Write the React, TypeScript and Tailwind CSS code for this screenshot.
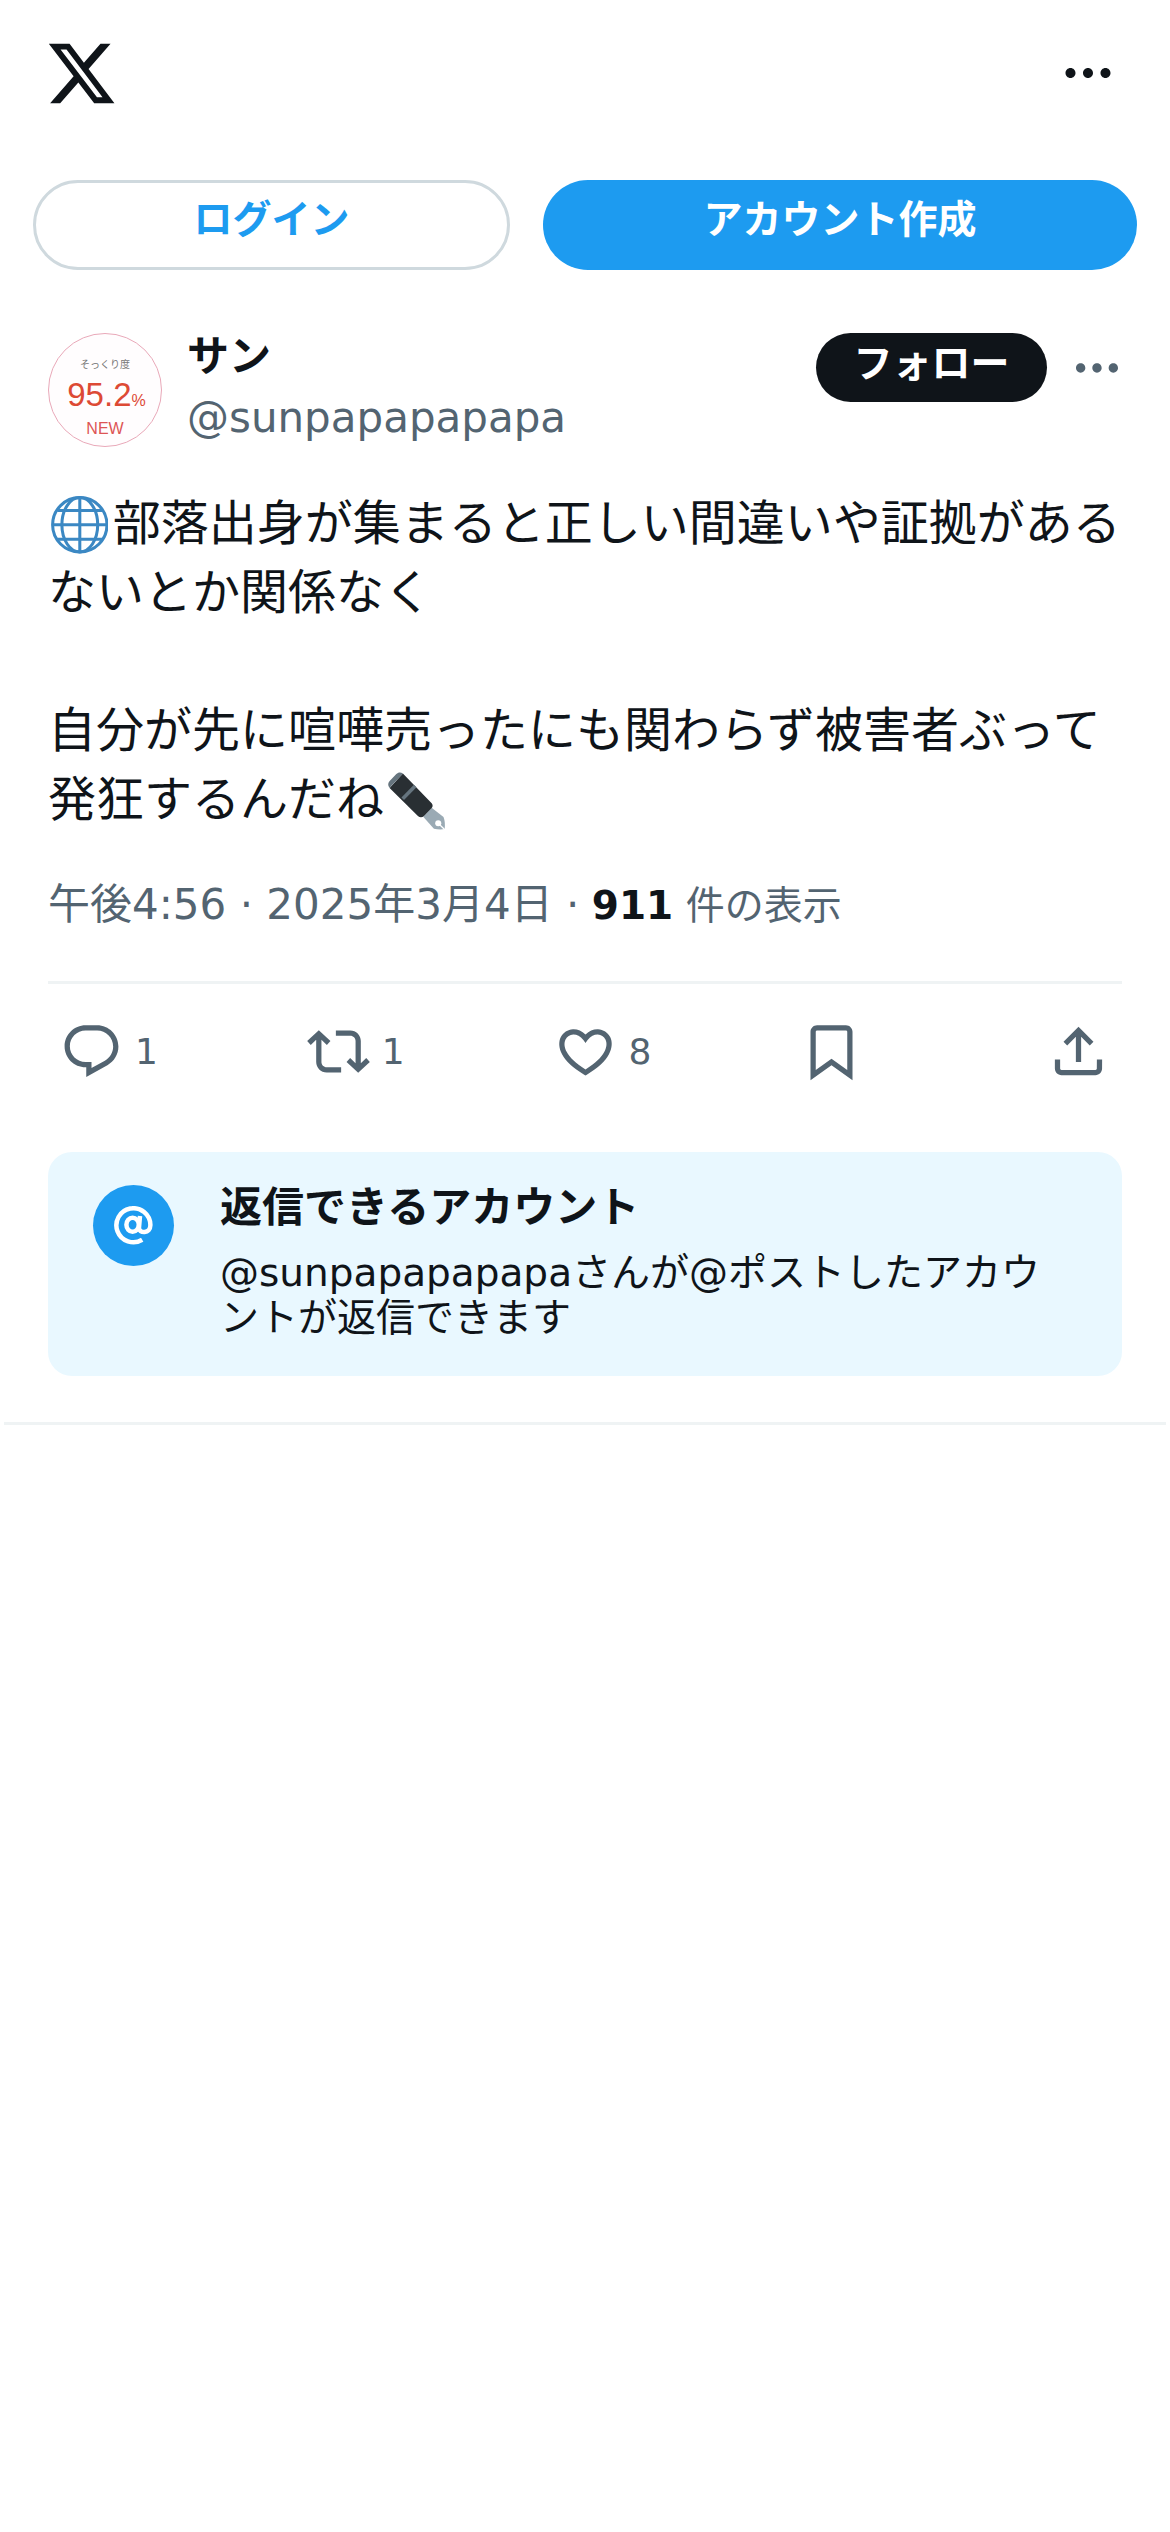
const ICONS = {
  x: 'M18.244 2.25h3.308l-7.227 8.26 8.502 11.24H16.17l-5.214-6.817L4.99 21.75H1.68l7.73-8.835L1.254 2.25H8.08l4.713 6.231zm-1.161 17.52h1.833L7.084 4.126H5.117z',
  more: 'M3 12c0-1.1.9-2 2-2s2 .9 2 2-.9 2-2 2-2-.9-2-2zm9 2c1.1 0 2-.9 2-2s-.9-2-2-2-2 .9-2 2 .9 2 2 2zm7 0c1.1 0 2-.9 2-2s-.9-2-2-2-2 .9-2 2 .9 2 2 2z',
  reply:
    'M1.751 10c0-4.42 3.584-8 8.005-8h4.366c4.49 0 8.129 3.64 8.129 8.13 0 2.96-1.607 5.68-4.196 7.11l-8.054 4.46v-3.69h-.067c-4.49.1-8.183-3.51-8.183-8.01zm8.005-6c-3.317 0-6.005 2.69-6.005 6 0 3.37 2.77 6.08 6.138 6.01l.351-.01h1.761v2.3l5.087-2.81c1.951-1.08 3.163-3.13 3.163-5.36 0-3.39-2.744-6.13-6.129-6.13H9.756z',
  repost:
    'M4.5 3.88l4.432 4.14-1.364 1.46L5.5 7.55V16c0 1.1.896 2 2 2H13v2H7.5c-2.209 0-4-1.79-4-4V7.55L1.432 9.48.068 8.02 4.5 3.88zM16.5 6H11V4h5.5c2.209 0 4 1.79 4 4v8.45l2.068-1.93 1.364 1.46-4.432 4.14-4.432-4.14 1.364-1.46 2.068 1.93V8c0-1.1-.896-2-2-2z',
  like: 'M16.697 5.5c-1.222-.06-2.679.51-3.89 2.16l-.805 1.09-.806-1.09C9.984 6.01 8.526 5.44 7.304 5.5c-1.243.07-2.349.78-2.91 1.91-.552 1.12-.633 2.78.479 4.82 1.074 1.97 3.257 4.27 7.129 6.61 3.87-2.34 6.052-4.64 7.126-6.61 1.111-2.04 1.03-3.7.477-4.82-.561-1.13-1.666-1.84-2.908-1.91zm4.187 7.69c-1.351 2.48-4.001 5.12-8.379 7.67l-.503.3-.504-.3c-4.379-2.55-7.029-5.19-8.382-7.67-1.36-2.5-1.41-4.86-.514-6.67.887-1.79 2.647-2.91 4.601-3.01 1.651-.09 3.368.56 4.798 2.01 1.429-1.45 3.146-2.1 4.796-2.01 1.954.1 3.714 1.22 4.601 3.01.896 1.81.846 4.17-.514 6.67z',
  bookmark:
    'M4 4.5C4 3.12 5.119 2 6.5 2h11C18.881 2 20 3.12 20 4.5v18.44l-8-5.71-8 5.71V4.5zM6.5 4c-.276 0-.5.22-.5.5v14.56l6-4.29 6 4.29V4.5c0-.28-.224-.5-.5-.5h-11z',
  share:
    'M12 2.59l5.7 5.7-1.41 1.42L13 6.41V16h-2V6.41l-3.3 3.3-1.41-1.42L12 2.59zM21 15l-.02 3.51c0 1.38-1.12 2.49-2.5 2.49H5.5C4.11 21 3 19.88 3 18.5V15h2v3.5c0 .28.22.5.5.5h12.98c.28 0 .5-.22.5-.5L19 15h2z',
};

type IconName = keyof typeof ICONS;

const ACTIONS: { icon: IconName; count?: number }[] = [
  { icon: 'reply', count: 1 },
  { icon: 'repost', count: 1 },
  { icon: 'like', count: 8 },
  { icon: 'bookmark' },
  { icon: 'share' },
];

function Icon({ name, className }: { name: IconName; className: string }) {
  return (
    <svg viewBox="0 0 24 24" className={`shrink-0 fill-current ${className}`} aria-hidden="true">
      <path d={ICONS[name]} />
    </svg>
  );
}

function Globe() {
  return (
    <svg
      viewBox="0 0 36 36"
      className="mr-[4.6px] ml-[2.6px] inline-block size-[57.6px] align-[-14px]"
      fill="none"
      stroke="#3b88c3"
      strokeWidth="1.9"
      aria-hidden="true"
    >
      <circle cx="18" cy="18" r="17" />
      <ellipse cx="18" cy="18" rx="11.2" ry="17" />
      <path d="M18 1v34M1 18h34M4 9h28M4 27h28" />
    </svg>
  );
}

function Pen() {
  return (
    <svg
      viewBox="0 0 36 36"
      className="mx-[3.6px] inline-block size-[57.6px] align-[-14px]"
      aria-hidden="true"
    >
      <path fill="#9aaab4" d="M22 28l5.300-5.600 7.400 5.800c.9 2.300 1 5 .7 7.500-2.300.3-4.600.2-6.700-.3z" />
      <circle cx="31.400" cy="32" r="1.900" fill="#fff" />
      <path stroke="#fff" strokeWidth=".8" d="M31.400 32l4 4" />
      <path fill="#292f33" d="M9.300 1L27.300 19.500c.8.9.8 2.100 0 3l-4.800 5c-1.100 1.100-2.700 1.100-3.800 0L1 10z" />
      <path fill="#66757f" d="M1.100 10C-.1 8.700-.2 7 .9 5.800L5.200 1.300C6.300.1 8-.1 9.300 1L8.500 1.900 2 8.700z" />
      <path fill="#66757f" d="M8.400 15.900l7.800-7.900 1.600 1.600-7.800 7.900z" />
    </svg>
  );
}

function MentionIcon() {
  return (
    <svg
      viewBox="0 0 39 39"
      className="size-[39px]"
      fill="none"
      stroke="#fff"
      strokeWidth="4.5"
      aria-hidden="true"
    >
      <ellipse cx="18.600" cy="18.800" rx="6.200" ry="7" />
      <path d="M26 10l-1 11.500c-.2 6.500 11.400 6.500 11.400-2.500A17 17 0 1 0 28.200 33.800" />
    </svg>
  );
}

function Avatar() {
  return (
    <div className="flex size-[114px] shrink-0 flex-col items-center rounded-full border border-[#e9a9b9] bg-[#fffdfe] font-['Liberation_Sans','Noto_Sans_CJK_JP',sans-serif]">
      <span className="mt-[23px] h-[15px] text-[10px] leading-[15px] text-[#777]">そっくり度</span>
      <span className="mt-[4px] ml-[3px] h-[38px] text-[33px] leading-[38px] text-[#dd4a35]">
        95.2<span className="text-[16px]">%</span>
      </span>
      <span className="mt-[6px] text-[16px] leading-[18px] text-[#dd5555]">NEW</span>
    </div>
  );
}

export default function App() {
  return (
    <div className="h-[2532px] w-[1170px] overflow-hidden bg-white font-['DejaVu_Sans','Noto_Sans_CJK_JP',sans-serif] whitespace-nowrap text-[#0f1419]">
      <header className="flex h-[146px] items-center justify-between pr-[52px] pl-[45px]">
        <Icon name="x" className="size-[73px]" />
        <Icon name="more" className="size-[60px]" />
      </header>

      <div className="mt-[34px] flex gap-[33px] px-[33px] text-[39px] leading-[46px] font-bold">
        <button className="h-[90px] w-[477px] rounded-full border-[3px] border-[#cfd9de] pb-[10px] text-[#1d9bf0]">
          ログイン
        </button>
        <button className="h-[90px] flex-1 rounded-full bg-[#1d9bf0] pb-[10px] text-white">
          アカウント作成
        </button>
      </div>

      <article className="px-[48px] pt-[63px]">
        <div className="flex h-[114px]">
          <Avatar />
          <div className="ml-[25px] flex-1 text-[42px]">
            <div className="h-[48px] leading-[48px] font-bold">サン</div>
            <div className="mt-[12px] leading-[50px] text-[#536471]">@sunpapapapapa</div>
          </div>
          <button className="h-[69px] w-[231px] rounded-full bg-[#0f1419] pb-[7px] text-[39px] leading-[46px] font-bold text-white">
            フォロー
          </button>
          <Icon name="more" className="mt-[7px] -mr-[3px] ml-[22px] size-[56px] text-[#536471]" />
        </div>

        <div className="mt-[42px] text-[48px] leading-[69px]">
          <p className="h-[69px]">
            <Globe />
            部落出身が集まると正しい間違いや証拠がある
          </p>
          <p className="h-[69px]">ないとか関係なく</p>
          <p className="mt-[69px] h-[69px]">自分が先に喧嘩売ったにも関わらず被害者ぶって</p>
          <p className="h-[69px]">
            発狂するんだね
            <Pen />
          </p>
        </div>

        <div className="mt-[41px] h-[60px] text-[42px] leading-[60px] text-[#536471]">
          午後4:56 · 2025年3月4日 ·
          <span className="text-[39px]">
            {' '}
            <span className="font-bold text-[#0f1419]">911</span> 件の表示
          </span>
        </div>

        <div className="mt-[46px] h-[3px] bg-[#eff3f4]" />

        <div className="mt-[36px] flex h-[63px] pl-[12px] text-[#536471]">
          {ACTIONS.map(({ icon, count }) => (
            <div key={icon} className="flex w-[246.8px] shrink-0 items-center last:w-[63px]">
              <Icon name={icon} className="size-[63px]" />
              {count && <span className="ml-[12px] text-[36px] leading-[42px]">{count}</span>}
            </div>
          ))}
        </div>

        <div className="mt-[69px] flex h-[224px] rounded-[24px] bg-[#e9f8ff] pt-[33px] pl-[45px]">
          <div className="flex size-[81px] shrink-0 items-center justify-center rounded-full bg-[#1d9bf0]">
            <MentionIcon />
          </div>
          <div className="ml-[46px]">
            <div className="text-[42px] leading-[46px] font-bold">返信できるアカウント</div>
            <p className="mt-[19px] text-[39px] leading-[45px]">
              @sunpapapapapaさんが@ポストしたアカウ
              <br />
              ントが返信できます
            </p>
          </div>
        </div>
      </article>

      <div className="mx-[4px] mt-[46px] h-[3px] bg-[#eff3f4]" />
    </div>
  );
}
